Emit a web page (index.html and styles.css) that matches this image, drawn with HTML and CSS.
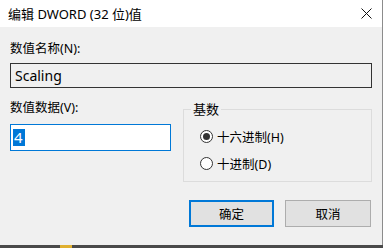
FILE: index.html
```html
<!DOCTYPE html>
<html lang="zh-CN">
<head>
    <meta charset="UTF-8">
    <title>编辑 DWORD (32 位)值</title>
    <link rel="stylesheet" href="styles.css">
</head>
<body>

<div class="window">
    <div class="titlebar">
        <span class="title">编辑 DWORD (32 位)值</span>
        <span class="close">
            <svg width="11" height="11" viewBox="0 0 11 11">
                <path d="M0.5 0.5 L10.5 10.5 M10.5 0.5 L0.5 10.5" stroke="#111" stroke-width="1" fill="none"/>
            </svg>
        </span>
    </div>

    <div class="content">
        <div class="label">数值名称(N):</div>
        <div class="edit edit-readonly">Scaling</div>

        <div class="row">
            <div class="data-col">
                <div class="label">数值数据(V):</div>
                <div class="edit edit-focus"><span class="selected">4</span></div>
            </div>

            <!-- radix group box -->
            <fieldset class="group">
                <legend>基数</legend>
                <div class="radio-row">
                    <span class="radio checked"></span>
                    <span>十六进制(H)</span>
                </div>
                <div class="radio-row">
                    <span class="radio"></span>
                    <span>十进制(D)</span>
                </div>
            </fieldset>
        </div>

        <div class="buttons">
            <div class="btn btn-default">确定</div>
            <div class="btn">取消</div>
        </div>
    </div>
</div>

<div class="taskbar">
    <span class="task-icon"></span>
</div>

</body>
</html>
```

FILE: styles.css
```css
* {
    box-sizing: border-box;
}

body {
    margin: 0;
    padding: 0;
    width: 383px;
    height: 248px;
    overflow: hidden;
    background-color: #f0f0f0;
    font-family: "Segoe UI", "Noto Sans", "Noto Sans CJK SC", sans-serif;
    font-size: 12.5px;
    color: #000;
}

.window {
    width: 383px;
    height: 245px;
    background-color: #f0f0f0;
    border-right: 1px solid #8c8c8c;
}

/* Title bar */
.titlebar {
    height: 27px;
    background-color: #fff;
    display: flex;
    align-items: center;
    justify-content: space-between;
    padding: 0 10px 0 8px;
}

.title {
    font-size: 13px;
    line-height: 16px;
}

.close {
    display: flex;
    width: 11px;
    height: 11px;
}

.content {
    padding: 14px 10px 0 10px;
}

.label {
    line-height: 16px;
    height: 16px;
}

/* Edit boxes */
.edit {
    margin-top: 6px;
    height: 25px;
    font-size: 14px;
    display: flex;
    align-items: center;
    padding-left: 4px;
}

.edit-readonly {
    border: 1px solid #333;
    background-color: #f0f0f0;
}

.edit-focus {
    margin-top: 8px;
    height: 27px;
    border: 1px solid #0078d7;
    background-color: #fff;
    padding-left: 2px;
}

.selected {
    background-color: #0078d7;
    color: #fff;
    font-size: 15px;
    line-height: 17px;
    padding: 0 2px 0 1px;
}

.row {
    display: flex;
    margin-top: 12px;
}

.data-col {
    width: 161px;
}

/* Group box */
.group {
    margin: 1px 0 0 12px;
    padding: 6px 0 0 16px;
    width: 189px;
    height: 81px;
    border: 1px solid #dcdcdc;
}

.group legend {
    padding: 0 2px;
    margin-left: -9px;
    line-height: 16px;
    font-size: 13px;
}

.radio-row {
    display: flex;
    align-items: center;
    height: 27px;
    gap: 4px;
}

.radio {
    width: 13px;
    height: 13px;
    border: 1px solid #333;
    border-radius: 50%;
    background-color: #fff;
    display: flex;
    align-items: center;
    justify-content: center;
}

.radio.checked::after {
    content: "";
    width: 7px;
    height: 7px;
    border-radius: 50%;
    background-color: #333;
}

/* Buttons */
.buttons {
    display: flex;
    justify-content: flex-end;
    gap: 11px;
    margin-top: 18px;
    margin-right: 1px;
}

.btn {
    width: 86px;
    height: 27px;
    background-color: #e1e1e1;
    border: 1px solid #adadad;
    display: flex;
    align-items: center;
    justify-content: center;
}

.btn-default {
    width: 85px;
    border: 2px solid #0078d7;
}

.taskbar {
    height: 3px;
    background-color: #4a4a4a;
}

.task-icon {
    display: block;
    width: 12px;
    height: 3px;
    margin-left: 60px;
    background-color: #e0b030;
}
```
